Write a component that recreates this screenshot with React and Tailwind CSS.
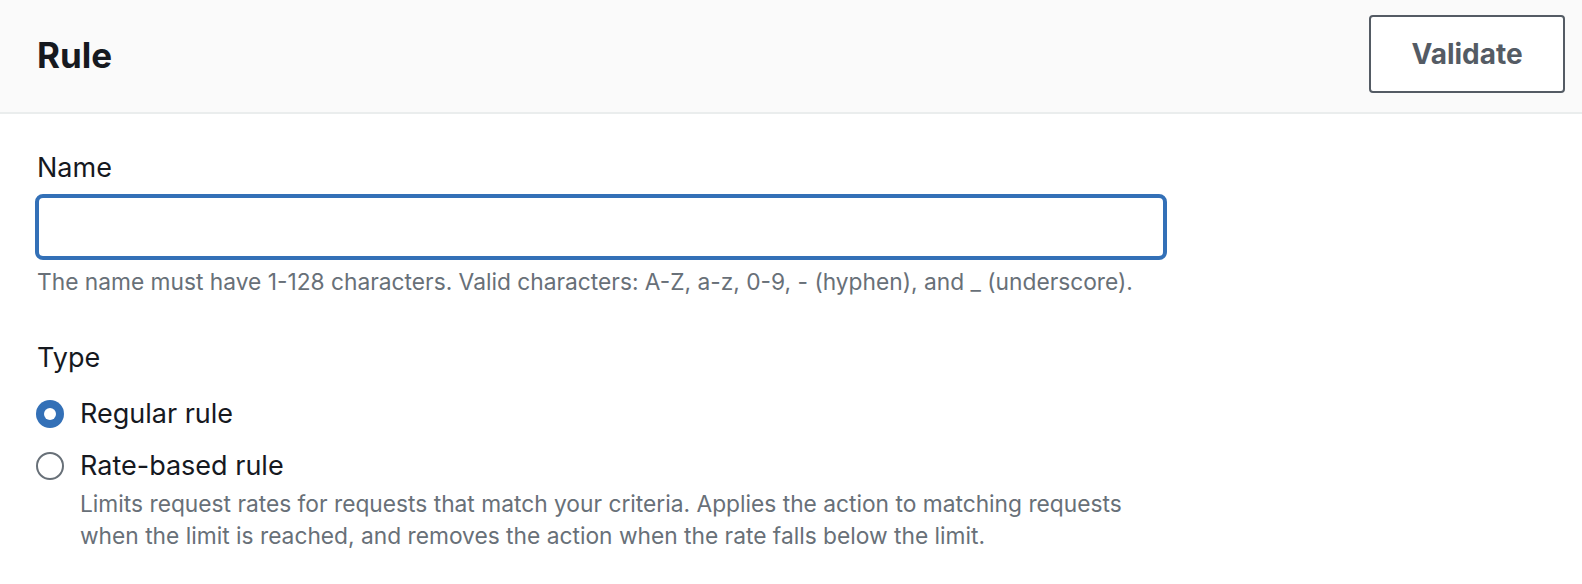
import { useState } from "react";

const font = { fontFamily: "Inter, Roboto, 'Liberation Sans', sans-serif" };

function Radio({ checked, label, description, onSelect }) {
  return (
    <label className="flex items-start cursor-pointer" onClick={onSelect}>
      <span className="w-[44px] h-[36px] flex items-center shrink-0">
        {checked ? (
          <span className="w-[28px] h-[28px] rounded-full bg-[#3370b7] flex items-center justify-center">
            <span className="w-[12px] h-[12px] rounded-full bg-white" />
          </span>
        ) : (
          <span className="w-[28px] h-[28px] rounded-full border-2 border-[#687078] bg-white" />
        )}
      </span>
      <span className="flex flex-col">
        <span className="text-[27px] leading-[36px] text-[#16191f]">{label}</span>
        {description && (
          <span className="text-[22.75px] leading-[32px] text-[#687078] mt-[4px]">{description}</span>
        )}
      </span>
    </label>
  );
}

export default function App() {
  const [name, setName] = useState("");
  const [type, setType] = useState("regular");

  return (
    <div className="w-[1582px] h-[584px] bg-white" style={font}>
      <div className="h-[114px] bg-[#fafafa] border-b-2 border-[#eaeded] flex justify-between pl-[37px] pr-[17px]">
        <h2 className="text-[35px] font-bold text-[#16191f] leading-[110px]">Rule</h2>
        <button className="mt-[15px] w-[196px] h-[78px] bg-white border-2 border-[#545b64] rounded-[4px] text-[28px] font-bold text-[#545b64]">
          Validate
        </button>
      </div>

      <div className="pl-[35px] pt-[30px] w-[1167px]">
        <div className="pl-[2px] text-[27px] leading-[48px] text-[#16191f]">Name</div>
        <input
          type="text"
          value={name}
          onChange={(e) => setName(e.target.value)}
          className="block w-[1132px] h-[66px] mt-[2px] border-4 border-[#3370b7] rounded-[8px] outline-none px-3 text-[27px]"
        />
        <div className="pl-[2px] mt-[6px] text-[22.75px] leading-[32px] text-[#687078]">
          The name must have 1-128 characters. Valid characters: A-Z, a-z, 0-9, - (hyphen), and _ (underscore).
        </div>

        <div className="pl-[2px] mt-[36px] text-[27px] leading-[48px] text-[#16191f]">Type</div>
        <div className="flex flex-col gap-[16px] mt-[14px] pl-[1px]">
          <Radio checked={type === "regular"} label="Regular rule" onSelect={() => setType("regular")} />
          <Radio
            checked={type === "rate"}
            label="Rate-based rule"
            description="Limits request rates for requests that match your criteria. Applies the action to matching requests when the limit is reached, and removes the action when the rate falls below the limit."
            onSelect={() => setType("rate")}
          />
        </div>
      </div>
    </div>
  );
}
